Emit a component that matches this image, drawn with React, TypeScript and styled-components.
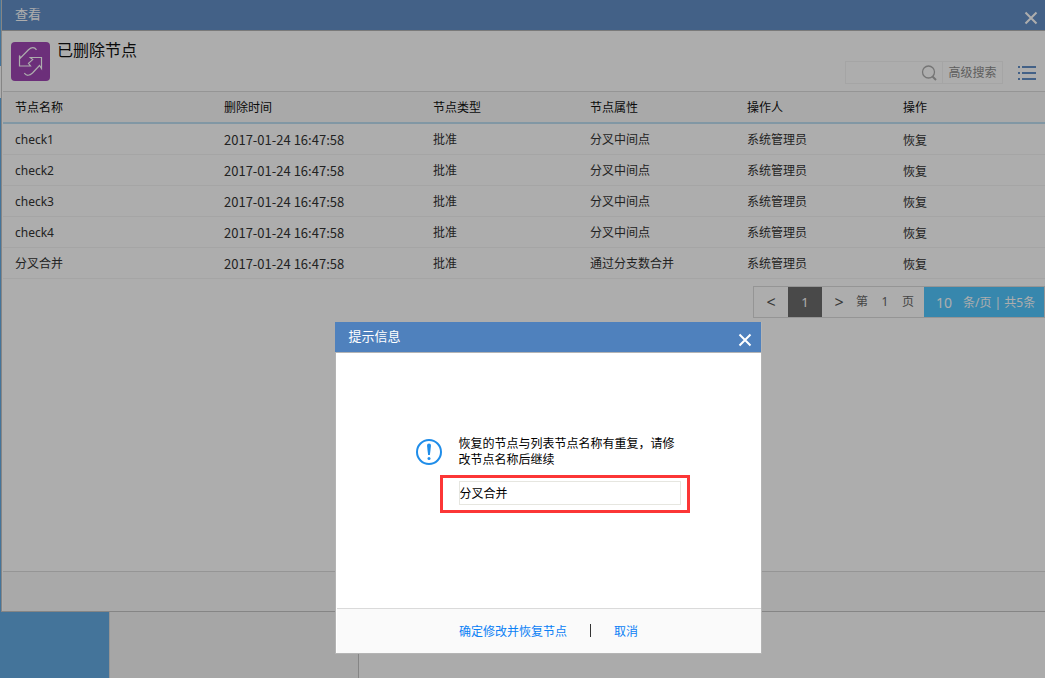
import React from "react";
import styled, { createGlobalStyle } from "styled-components";

const GlobalStyle = createGlobalStyle`
  * { box-sizing: border-box; }
  body {
    margin: 0;
    background: #fafafa;
    color: #333;
    font: 12px/16px "Noto Sans", "Noto Sans CJK SC", sans-serif;
  }
  button, input { font: inherit; color: inherit; }
`;

const Page = styled.div`
  position: relative;
  display: flex;
  flex-direction: column;
  min-height: 100vh;
  overflow: hidden;
`;

const WindowArea = styled.div`
  display: flex;
  min-height: 612px;
`;

const Edge = styled.div`
  width: 1px;
  background: linear-gradient(#65ace4 66px, #fff 66px, #fff 98px, #65ace4 98px);
`;

const Panel = styled.section`
  flex: 1;
  min-width: 0;
  display: flex;
  flex-direction: column;
  background: #fff;
  border-left: 1px solid #c4c4c4;
  border-bottom: 1px solid #c4c4c4;
`;

const TitleBar = styled.header<{ $modal?: boolean }>`
  display: flex;
  justify-content: space-between;
  height: 31px;
  padding: 0 ${(p) => (p.$modal ? 9 : 7)}px 0 13px;
  color: #fff;
  background: ${(p) => (p.$modal ? "#4f81bd" : "#6490c8")};
  border-bottom: 1px solid #b4b4b4;
`;

const TitleText = styled.h2`
  margin: 0;
  font-size: 13px;
  font-weight: 400;
  line-height: 28px;
`;

const IconButton = styled.button`
  display: flex;
  padding: 0;
  border: 0;
  background: none;
`;

const CloseButton = styled(IconButton)`
  margin-top: 11px;
  height: 14px;
`;

const Heading = styled.div`
  display: flex;
  height: 60px;
  padding: 11px 9px 0 9px;
`;

const HeadingText = styled.h1`
  flex: 1;
  margin: 0 0 0 7px;
  color: #111;
  font-size: 16px;
  font-weight: 400;
  line-height: 16px;
`;

const Tools = styled.div`
  display: flex;
  align-items: center;
  height: 23px;
  margin-top: 19px;
`;

const SearchBox = styled.div`
  display: flex;
  height: 23px;
  margin-right: 15px;
  border: 1px solid #f4f4f4;
`;

const SearchInput = styled.input`
  width: 75px;
  padding: 0 4px;
  border: 0;
  outline: 0;
  background: none;
`;

const SearchButton = styled(IconButton)`
  align-items: center;
  width: 21px;
`;

const AdvancedButton = styled.button`
  width: 60px;
  padding: 0;
  color: #8c8c8c;
  background: none;
  border: 0;
  border-left: 1px solid #f4f4f4;
`;

const Table = styled.table`
  width: calc(100% - 1px);
  margin-left: 1px;
  border-spacing: 0;
  table-layout: fixed;
  text-align: left;
`;

const Col = styled.col<{ $width: number }>`
  width: ${(p) => p.$width}px;
`;

const Th = styled.th`
  height: 33px;
  padding: 2px 12px 0;
  color: #111;
  font-weight: 400;
  background: #fafafa;
  border-top: 1px solid #dcdcdc;
  border-bottom: 2px solid #bfdff2;
`;

const Td = styled.td`
  height: 31px;
  padding: 2px 12px 0;
  border-bottom: 1px solid #f3f3f3;
`;

const Stamp = styled.time`
  display: block;
  font-family: "Noto Sans CJK SC", sans-serif;
  font-size: 13px;
`;

const RestoreButton = styled.button`
  display: block;
  padding: 2px 0 0;
  border: 0;
  background: none;
`;

const Pager = styled.nav`
  display: flex;
  align-self: flex-end;
  height: 32px;
  margin-top: 7px;
  color: #666;
  border: 1px solid #dcdcdc;
  font-size: 13px;
`;

const PageButton = styled.button<{ $current?: boolean }>`
  width: 34px;
  padding: 0;
  border: 0;
  font-size: ${(p) => (p.$current ? 13 : 16)}px;
  color: ${(p) => (p.$current ? "#fff" : "#555")};
  background: ${(p) => (p.$current ? "#6c6c6c" : "none")};
`;

const PageJump = styled.div`
  display: flex;
  align-items: center;
  justify-content: space-between;
  width: 68px;
  padding-right: 10px;
  font-size: 12px;
`;

const PageSize = styled.div`
  display: flex;
  align-items: center;
  gap: 11px;
  width: 120px;
  padding: 2px 0 0 12px;
  color: #fff;
  background: #51c8ff;
  font-size: 12px;
  white-space: nowrap;
`;

const SizeValue = styled.span`
  font-size: 14px;
`;

const PanelFooter = styled.footer`
  height: 40px;
  margin: auto 0 0 1px;
  background: #fafafa;
  border-top: 1px solid #dcdcdc;
`;

const Backdrop = styled.div`
  display: flex;
  flex: 1;
  background: #f5f5f5;
`;

const BlueBlock = styled.div`
  width: 109px;
  background: #65ace4;
`;

const TreeBlock = styled.div`
  width: 250px;
  border-left: 1px solid #dcdcdc;
  border-right: 1px solid #c4c4c4;
`;

const RestBlock = styled.div`
  flex: 1;
  background: #fdfdfd;
`;

const Mask = styled.div`
  position: absolute;
  inset: 0;
  background: rgba(0, 0, 0, 0.32);
`;

const Dialog = styled.section`
  position: absolute;
  top: 322px;
  left: calc(50% - 188px);
  display: flex;
  flex-direction: column;
  width: 427px;
  min-height: 332px;
  background: #fff;
  border: 1px solid #b4b4b4;
  border-top: 0;

  > header {
    margin-left: -1px;
    padding-left: 14px;
  }
`;

const DialogBody = styled.div`
  flex: 1;
  padding: 83px 70px 0 80px;
  color: #000;
`;

const Message = styled.label`
  display: flex;
  align-items: flex-start;
  gap: 17px;

  svg {
    flex: none;
    margin-top: 3px;
  }
`;

const MessageText = styled.span`
  width: 218px;
`;

const Highlight = styled.div`
  width: 250px;
  height: 38px;
  margin: 7px 0 0 24px;
  padding: 3px 6px 3px 16px;
  border: 3px solid #fc3636;
`;

const NameInput = styled.input`
  display: block;
  width: 222px;
  height: 24px;
  padding: 0;
  border: 1px solid #e6e6e0;
  outline: 0;
`;

const DialogFooter = styled.footer`
  display: flex;
  align-items: center;
  justify-content: center;
  gap: 23px;
  height: 45px;
  margin-left: 1px;
  padding-top: 1px;
  background: #fafafa;
  border-top: 1px solid #dadada;
`;

const Action = styled.button`
  padding: 1px 0 0;
  border: 0;
  color: #0a80f5;
  background: none;
`;

const Divider = styled.span`
  width: 1px;
  height: 13px;
  margin-bottom: 2px;
  background: #333;
`;

const CloseIcon = () => (
  <svg width="14" height="14" viewBox="0 0 14 14" fill="none" stroke="#fff" strokeWidth="2">
    <path d="M1.5 1.5l11 11M12.5 1.5l-11 11" />
  </svg>
);

const FlowIcon = () => (
  <svg width="39" height="39" viewBox="0 0 39 39" fill="none" stroke="#fff" strokeWidth="1.2">
    <rect width="39" height="39" rx="4" fill="#a046b4" stroke="none" />
    <path d="M25.500 7.800C23.500 5 20.500 5 17.500 7.800L9.500 16L8.500 13.500V24H19.500L17.500 21.300L21.700 17.600L19.300 15.500H30.500V26.500L28.500 23.500L21.500 31C18.500 34 15.500 34 13.300 31.200" />
  </svg>
);

const people = "系统管理员";
const time = "2017-01-24 16:47:58";
const rows = [
  { name: "check1", attr: "分叉中间点" },
  { name: "check2", attr: "分叉中间点" },
  { name: "check3", attr: "分叉中间点" },
  { name: "check4", attr: "分叉中间点" },
  { name: "分叉合并", attr: "通过分支数合并" },
];
const headers = ["节点名称", "删除时间", "节点类型", "节点属性", "操作人", "操作"];
const widths = [209, 209, 157, 157, 156];

export default function App() {
  return (
    <Page>
      <GlobalStyle />
      <WindowArea>
        <Edge />
        <Panel>
          <TitleBar>
            <TitleText>查看</TitleText>
            <CloseButton aria-label="关闭"><CloseIcon /></CloseButton>
          </TitleBar>
          <Heading>
            <FlowIcon />
            <HeadingText>已删除节点</HeadingText>
            <Tools>
              <SearchBox>
                <SearchInput aria-label="搜索" />
                <SearchButton aria-label="搜索">
                  <svg width="16" height="16" viewBox="0 0 16 16" fill="none" stroke="#adadad" strokeWidth="1.3">
                    <circle cx="7.500" cy="7" r="6" />
                    <path d="M11.500 11.500l3.500 3.500" strokeWidth="2" />
                  </svg>
                </SearchButton>
                <AdvancedButton>高级搜索</AdvancedButton>
              </SearchBox>
              <IconButton aria-label="菜单">
                <svg width="18" height="14" viewBox="0 0 18 14" fill="#6490c8">
                  <path d="M0 0h2v2H0zM4 0h14v2H4zM0 6h2v2H0zM4 6h14v2H4zM0 12h2v2H0zM4 12h14v2H4z" />
                </svg>
              </IconButton>
            </Tools>
          </Heading>
          <Table>
            <colgroup>
              {widths.map((w, i) => <Col key={i} $width={w} />)}
              <col />
            </colgroup>
            <thead>
              <tr>{headers.map((h) => <Th key={h}>{h}</Th>)}</tr>
            </thead>
            <tbody>
              {rows.map((r) => (
                <tr key={r.name}>
                  <Td>{r.name}</Td>
                  <Td><Stamp>{time}</Stamp></Td>
                  <Td>批准</Td>
                  <Td>{r.attr}</Td>
                  <Td>{people}</Td>
                  <Td><RestoreButton>恢复</RestoreButton></Td>
                </tr>
              ))}
            </tbody>
          </Table>
          <Pager aria-label="分页">
            <PageButton>&lt;</PageButton>
            <PageButton $current>1</PageButton>
            <PageButton>&gt;</PageButton>
            <PageJump><span>第</span><span>1</span><span>页</span></PageJump>
            <PageSize><SizeValue>10</SizeValue><span>条/页 | 共5条</span></PageSize>
          </Pager>
          <PanelFooter />
        </Panel>
      </WindowArea>
      <Backdrop>
        <BlueBlock />
        <TreeBlock />
        <RestBlock />
      </Backdrop>
      <Mask />
      <Dialog role="dialog" aria-labelledby="dialog-title">
        <TitleBar $modal>
          <TitleText id="dialog-title">提示信息</TitleText>
          <CloseButton aria-label="关闭"><CloseIcon /></CloseButton>
        </TitleBar>
        <DialogBody>
          <Message htmlFor="node-name">
            <svg width="26" height="26" viewBox="0 0 26 26">
              <circle cx="13" cy="13" r="12" fill="none" stroke="#1f8de9" strokeWidth="2" />
              <path d="M11 6.500a2 2 0 0 1 4 0L13.900 16h-1.800z" fill="#1f8de9" />
              <circle cx="13" cy="19.500" r="1.500" fill="#1f8de9" />
            </svg>
            <MessageText>恢复的节点与列表节点名称有重复，请修改节点名称后继续</MessageText>
          </Message>
          <Highlight>
            <NameInput id="node-name" defaultValue="分叉合并" />
          </Highlight>
        </DialogBody>
        <DialogFooter>
          <Action>确定修改并恢复节点</Action>
          <Divider />
          <Action>取消</Action>
        </DialogFooter>
      </Dialog>
    </Page>
  );
}
